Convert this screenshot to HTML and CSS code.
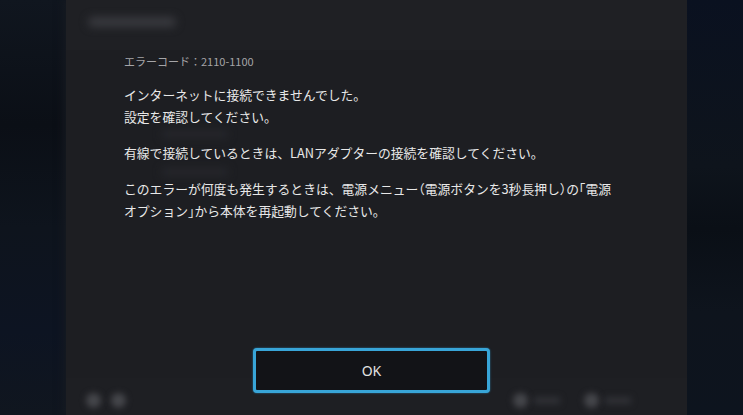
FILE: index.html
```html
<!DOCTYPE html>
<html lang="ja">
<head>
    <meta charset="UTF-8">
    <meta name="viewport" content="width=device-width, initial-scale=1.0">
    <title>エラー</title>
    <link rel="stylesheet" href="styles.css">
</head>
<body>
    <div class="screen">
        <div class="side side-left"></div>
        <div class="panel">
            <div class="panel-head">
                <div class="blur-title"></div>
            </div>
            <div class="panel-body">
                <div class="blur-line"></div>
                <div class="blur-line"></div>
            </div>
            <div class="panel-foot">
                <div class="foot-left">
                    <span class="blur-dot"></span>
                    <span class="blur-dot"></span>
                </div>
                <div class="foot-right">
                    <span class="blur-dot"></span><span class="blur-label"></span>
                    <span class="blur-dot"></span><span class="blur-label"></span>
                </div>
            </div>
        </div>
        <div class="side side-right"></div>
    </div>

    <div class="dialog">
        <div class="message">
            <p class="code">エラーコード：2110-1100</p>
            <p>インターネットに接続できませんでした。<br>設定を確認してください。</p>
            <p>有線で接続しているときは、LANアダプターの接続を確認してください。</p>
            <p>このエラーが何度も発生するときは、電源メニュー<span class="half">（</span>電源ボタンを3秒長押し<span class="half">）</span>の<span class="half">「</span>電源<br>オプション<span class="half">」</span>から本体を再起動してください。</p>
        </div>
        <div class="actions">
            <button class="ok-button">OK</button>
        </div>
    </div>
</body>
</html>
```

FILE: styles.css
```css
body {
    margin: 0;
    width: 743px;
    height: 415px;
    overflow: hidden;
    position: relative;
    background-color: #0e141d;
    font-family: "Noto Sans CJK JP", "Noto Sans", sans-serif;
}

/* blurred settings screen behind the dialog */
.screen {
    display: flex;
    height: 100%;
}
.side {
    flex: none;
}
.side-left {
    width: 66px;
    background: linear-gradient(180deg, #10161f 0%, #0b0f16 30%, #0e141d 55%, #0d1422 80%, #10161f 100%);
}
.side-right {
    width: 56px;
    background: linear-gradient(180deg, #0a1120 0%, #0e141c 40%, #0a0f16 55%, #0e141d 75%, #0d141e 100%);
}
.panel {
    flex: 1;
    display: flex;
    flex-direction: column;
    background-color: #1d1e22;
    box-shadow: 0 0 8px 2px #171b22;
}
.panel-head {
    height: 50px;
    background-color: #1f2024;
    display: flex;
    align-items: center;
    padding-left: 22px;
}
.blur-title {
    width: 88px;
    height: 10px;
    margin-top: -6px;
    background-color: #393a3f;
    border-radius: 5px;
    filter: blur(4px);
}
.panel-body {
    flex: 1;
    padding: 80px 0 0 96px;
    display: flex;
    flex-direction: column;
    gap: 30px;
}
.blur-line {
    width: 66px;
    height: 8px;
    background-color: #26272c;
    filter: blur(4px);
}
.panel-foot {
    height: 37px;
    background-color: #1e1f23;
    display: flex;
    align-items: center;
    justify-content: space-between;
    padding: 0 38px 0 20px;
}
.foot-left, .foot-right {
    display: flex;
    align-items: center;
    gap: 10px;
    margin-top: 8px;
}
.foot-right {
    gap: 6px;
}
.blur-dot {
    width: 15px;
    height: 15px;
    border-radius: 50%;
    background-color: #45464b;
    filter: blur(3px);
}
.blur-label {
    width: 26px;
    height: 7px;
    margin-right: 18px;
    background-color: #303136;
    filter: blur(3px);
}

/* error dialog */
.dialog {
    position: absolute;
    inset: 0;
    display: flex;
    flex-direction: column;
    padding: 52px 0 22px;
}
.message {
    padding-left: 124px;
    color: #e8e8e8;
    font-size: 12.8px;
    line-height: 22px;
}
.message p {
    margin: 0 0 14px;
}
.message .code {
    color: #a5a5a8;
    font-size: 11px;
    line-height: 18px;
    margin-bottom: 14px;
}
.half {
    font-feature-settings: "halt";
}
.actions {
    margin-top: auto;
    display: flex;
    justify-content: center;
}
.ok-button {
    width: 237px;
    height: 45px;
    background-color: #121317;
    border: 3px solid #38a5d8;
    border-radius: 4px;
    color: #e2e2e2;
    font-family: "Noto Sans", sans-serif;
    font-size: 14px;
    box-shadow: 0 0 2px #2a7fa8;
}
```
